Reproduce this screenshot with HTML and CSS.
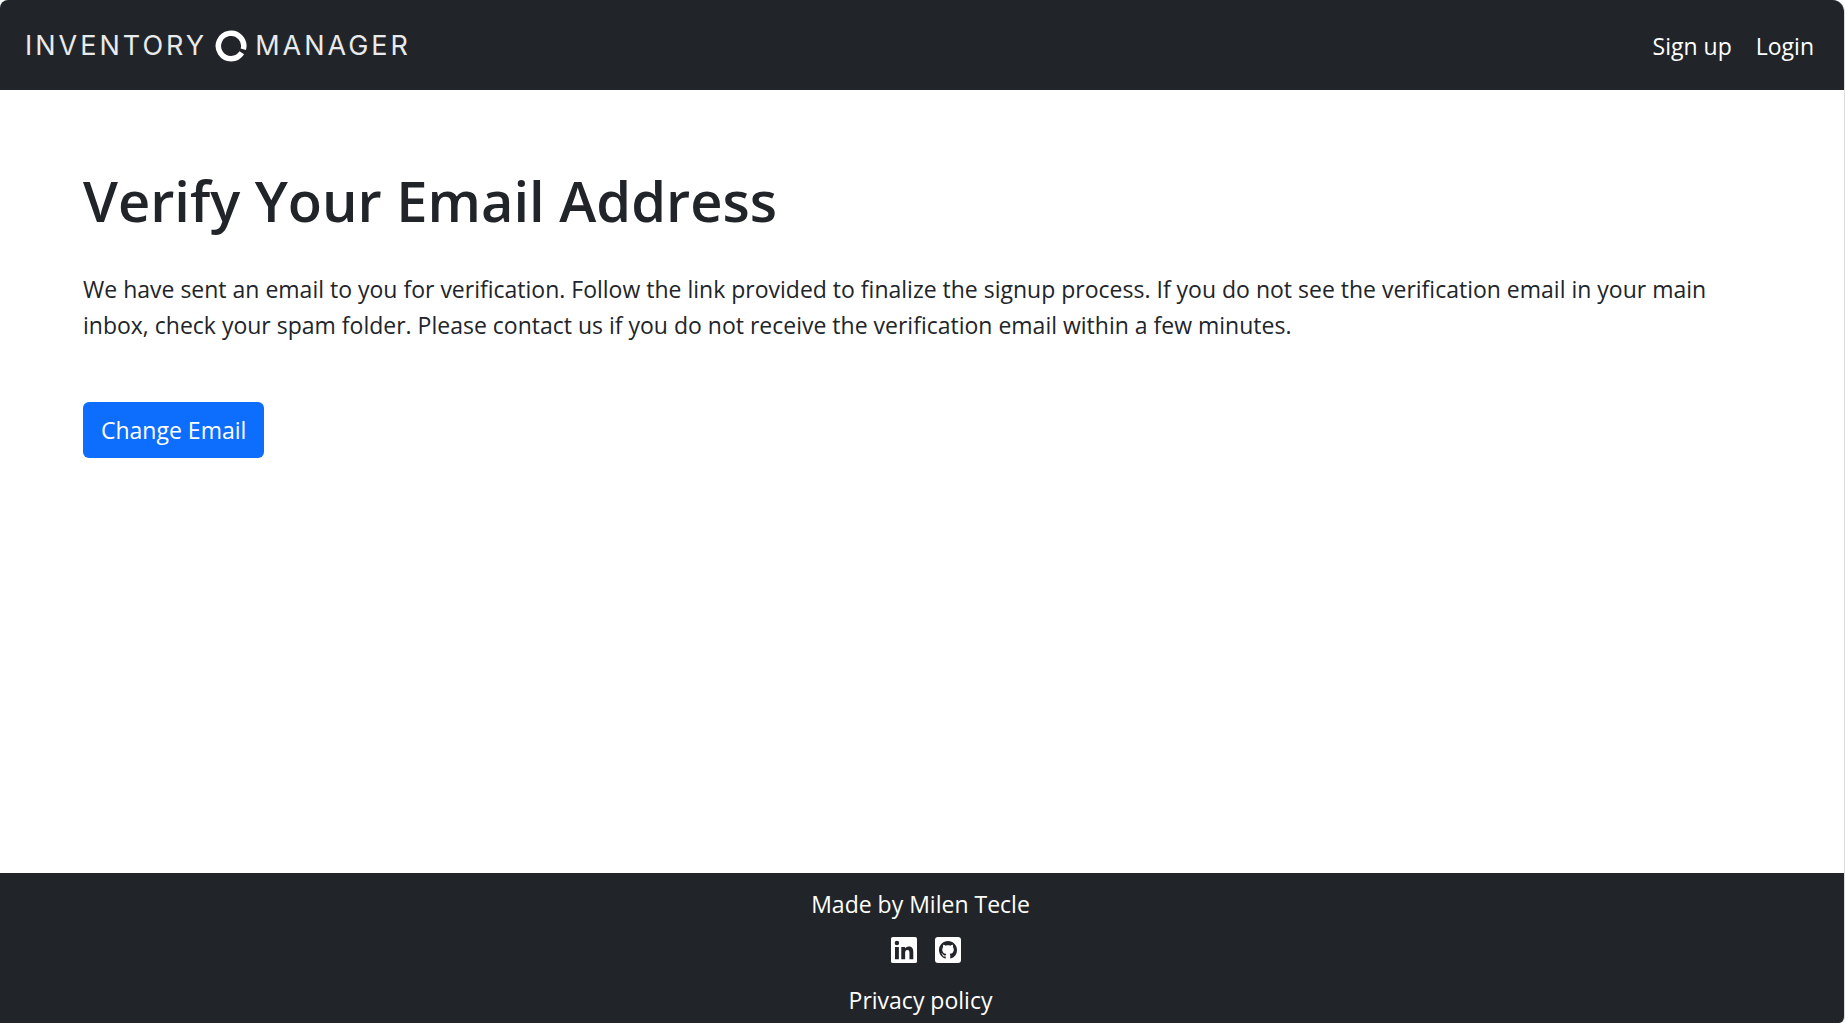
FILE: index.html
```html
<!DOCTYPE html>
<html lang="en">
<head>
<meta charset="utf-8">
<meta name="viewport" content="width=device-width, initial-scale=1">
<title>Verify Your Email Address - Inventory Manager</title>
<link rel="stylesheet" href="styles.css">
</head>
<body>
<div class="page">
  <header class="navbar">
    <a class="brand" href="#">
      <span>INVENTORY</span>
      <svg class="brand-ring" viewBox="0 0 32 34" aria-hidden="true"><path d="M28.300 20.300A12.700 12.700 0 1 0 26.800 23.700" fill="none" stroke="#fff" stroke-width="5.500"/></svg>
      <span>MANAGER</span>
    </a>
    <nav class="nav-links">
      <a href="#">Sign up</a>
      <a href="#">Login</a>
    </nav>
  </header>

  <main class="content">
    <h1>Verify Your Email Address</h1>
    <p>We have sent an email to you for verification. Follow the link provided to finalize the signup process. If you do not see the verification email in your main inbox, check your spam folder. Please contact us if you do not receive the verification email within a few minutes.</p>
    <button class="btn" type="button">Change Email</button>
  </main>

  <footer class="footer">
    <div>Made by Milen Tecle</div>
    <div class="social">
      <a href="#" aria-label="LinkedIn">
        <svg viewBox="0 32 448 448" aria-hidden="true"><rect y="32" width="448" height="448" rx="32" fill="currentColor"/><path fill="#212529" d="M69 202.200h66.500V416H69zM102.200 96a38.500 38.500 0 1 1 0 77a38.500 38.500 0 0 1 0-77zM384.300 416h-66.400V312c0-24.800-.5-56.700-34.500-56.700-34.600 0-39.900 27-39.900 54.900V416h-66.400V202.200h63.700v29.200h.9c8.900-16.800 30.600-34.500 62.900-34.500 67.200 0 79.700 44.300 79.700 101.900z"/></svg>
      </a>
      <a href="#" aria-label="GitHub">
        <svg viewBox="0 0 26 26" aria-hidden="true"><rect width="26" height="26" rx="3" fill="currentColor"/><g transform="translate(4 4) scale(1.125)"><path fill="#212529" d="M8 0C3.580 0 0 3.580 0 8c0 3.540 2.290 6.530 5.470 7.590.4.070.55-.17.55-.38 0-.19-.01-.82-.01-1.490-2.010.37-2.530-.49-2.690-.94-.09-.23-.48-.94-.82-1.130-.28-.15-.68-.52-.01-.53.63-.01 1.080.58 1.230.82.72 1.210 1.870.87 2.330.66.07-.52.28-.87.51-1.070-1.780-.2-3.640-.89-3.640-3.950 0-.87.31-1.590.82-2.150-.08-.2-.36-1.020.08-2.120 0 0 .67-.21 2.200.82.64-.18 1.320-.27 2-.27s1.360.09 2 .27c1.530-1.040 2.200-.82 2.200-.82.44 1.100.16 1.920.08 2.120.51.56.82 1.270.82 2.150 0 3.070-1.870 3.750-3.650 3.950.29.25.54.73.54 1.480 0 1.070-.01 1.930-.01 2.200 0 .21.15.46.55.38A8.010 8.010 0 0 0 16 8c0-4.420-3.580-8-8-8z"/></g></svg>
      </a>
    </div>
    <a href="#">Privacy policy</a>
  </footer>
</div>
</body>
</html>
```
FILE: styles.css
```css
* { box-sizing: border-box; }

body {
  margin: 0;
  background: #fff;
  color: #212529;
  font: 400 23px/36px "Open Sans", "Noto Sans", sans-serif;
}

a { color: #fff; text-decoration: none; }

.page {
  display: flex;
  flex-direction: column;
  min-height: 100vh;
  border-right: 1px solid #dcdcdc;
  border-radius: 8px 12px 6px 0;
  overflow: hidden;
}

.navbar {
  display: flex;
  align-items: center;
  justify-content: space-between;
  padding: 28px 30px 26px 25px;
  background: #212529;
}

.brand {
  display: flex;
  align-items: center;
  gap: 8px;
  color: #e9eaec;
  font-family: Inter, sans-serif;
  font-size: 27px;
  font-weight: 400;
  letter-spacing: 3px;
}

.brand-ring { width: 32px; height: 34px; }

.nav-links { display: flex; gap: 24px; }

.content { flex: 1; padding: 74px 83px 48px; }

h1 {
  margin: 0 0 35px;
  font-size: 56px;
  font-weight: 600;
  line-height: 72px;
}

p { margin: 0 0 59px; }

.btn {
  height: 56px;
  padding: 0 18px;
  border: 0;
  border-radius: 6px;
  background: #0d6efd;
  color: #fff;
  font: inherit;
}

.footer {
  display: flex;
  flex-direction: column;
  align-items: center;
  padding: 13px 3px 5px 0;
  background: #212529;
  color: #fff;
}

.social {
  display: flex;
  gap: 18px;
  padding: 15px 0 19px 10px;
}

.social svg { display: block; width: 26px; height: 26px; }
```
